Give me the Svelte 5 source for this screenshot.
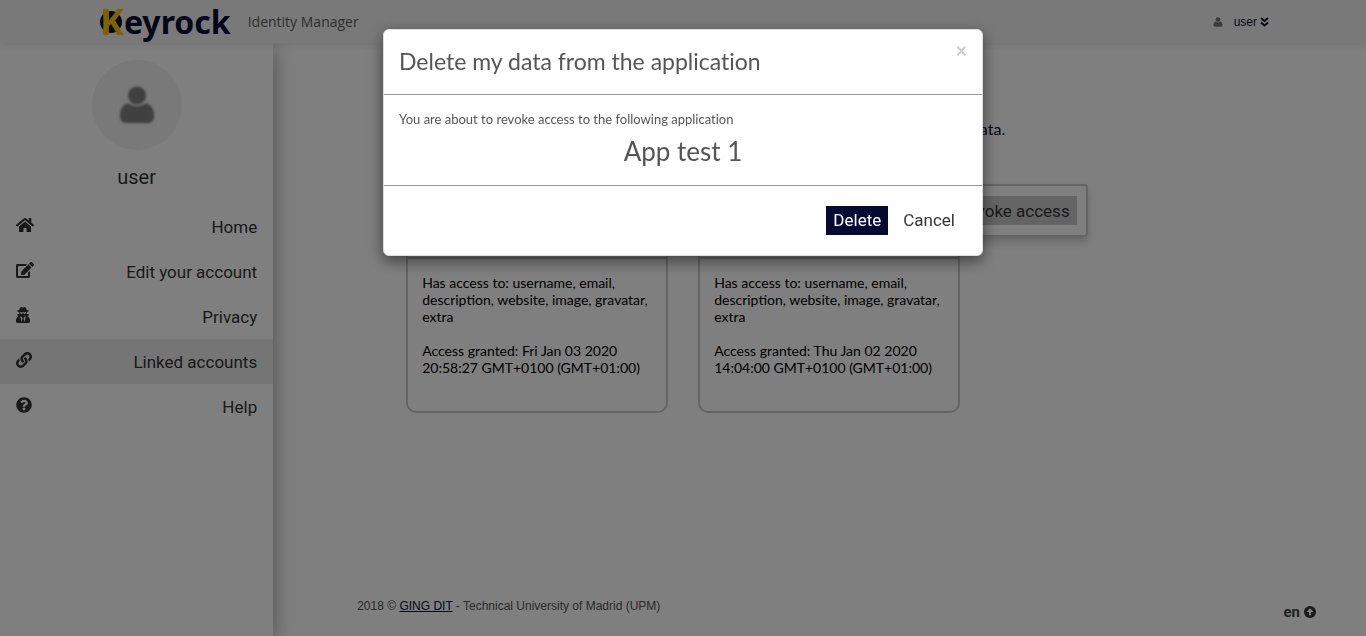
<script>
  const menu = [
    { label: 'Home', box: '0 0 576 512', w: 18, path: 'M280.37 148.26L96 300.11V464a16 16 0 0 0 16 16l112.06-.29a16 16 0 0 0 15.92-16V368a16 16 0 0 1 16-16h64a16 16 0 0 1 16 16v95.64a16 16 0 0 0 16 16.05L464 480a16 16 0 0 0 16-16V300L295.67 148.26a12.19 12.19 0 0 0-15.3 0zM571.6 251.47L488 182.56V44.05a12 12 0 0 0-12-12h-56a12 12 0 0 0-12 12v72.61L318.47 43a48 48 0 0 0-61 0L4.34 251.47a12 12 0 0 0-1.6 16.9l25.5 31A12 12 0 0 0 45.15 301l235.22-193.74a12.19 12.19 0 0 1 15.3 0L530.9 301a12 12 0 0 0 16.9-1.6l25.5-31a12 12 0 0 0-1.7-16.93z' },
    { label: 'Edit your account', box: '0 0 576 512', w: 18, path: 'M402.6 83.2l90.2 90.2c3.8 3.8 3.8 10 0 13.8L274.4 405.6l-92.8 10.3c-12.4 1.4-22.9-9.1-21.5-21.5l10.3-92.8L388.8 83.2c3.8-3.8 10-3.8 13.8 0zm162-22.9l-48.8-48.8c-15.2-15.2-39.9-15.2-55.2 0l-35.4 35.4c-3.8 3.8-3.8 10 0 13.8l90.2 90.2c3.8 3.8 10 3.8 13.8 0l35.4-35.4c15.2-15.3 15.2-40 0-55.2zM384 346.2V448H64V128h229.8c3.2 0 6.2-1.3 8.5-3.5l40-40c7.6-7.6 2.2-20.5-8.5-20.5H48C21.5 64 0 85.5 0 112v352c0 26.5 21.5 48 48 48h352c26.5 0 48-21.5 48-48V306.2c0-10.7-12.9-16-20.5-8.5l-40 40c-2.2 2.3-3.5 5.3-3.5 8.5z' },
    { label: 'Privacy', box: '0 0 448 512', w: 14, path: 'M383.9 308.3l23.9-62.6c4-10.5-3.7-21.7-15-21.7h-58.5c11-18.9 17.8-40.6 17.8-64v-.3c39.2-7.8 64-19.1 64-31.7 0-13.3-27.3-25.1-70.1-33-9.2-32.8-27-65.8-40.6-82.8-9.5-11.9-25.9-15.6-39.5-8.8l-27.6 13.8c-9 4.5-19.6 4.5-28.6 0L182.1 3.4c-13.6-6.8-30-3.1-39.5 8.8-13.5 17-31.4 50-40.6 82.8-42.7 7.9-70 19.7-70 33 0 12.6 24.8 23.9 64 31.7v.3c0 23.4 6.8 45.1 17.8 64H56.3c-11.5 0-19.2 11.7-14.7 22.3l25.8 60.2C27.3 329.8 0 372.7 0 422.4v44.8C0 491.9 20.1 512 44.8 512h358.4c24.7 0 44.8-20.1 44.8-44.8v-44.8c0-48.4-25.8-90.4-64.1-114.1zM176 480l-41.6-192 49.6 32 24 40-32 120zm96 0l-32-120 24-40 49.6-32L272 480zm41.7-298.5c-3.9 11.9-7 24.6-16.5 33.4-10.1 9.3-48 22.4-64-25-2.8-8.4-15.4-8.4-18.3 0-17 50.2-56 32.4-64 25-9.5-8.8-12.7-21.5-16.5-33.4-.8-2.5-6.3-5.7-6.3-5.8v-10.8c28.3 3.6 61 5.8 96 5.8s67.7-2.1 96-5.8v10.8c-.1.1-5.6 3.2-6.4 5.8z' },
    { label: 'Linked accounts', active: true, box: '0 0 512 512', w: 16, path: 'M326.612 185.391c59.747 59.809 58.927 155.698.36 214.59-.11.12-.24.25-.36.37l-67.2 67.2c-59.27 59.27-155.699 59.262-214.96 0-59.27-59.26-59.27-155.7 0-214.96l37.106-37.106c9.84-9.84 26.786-3.3 27.294 10.606.648 17.722 3.826 35.527 9.69 52.721 1.986 5.822.567 12.262-3.783 16.612l-13.087 13.087c-28.026 28.026-28.905 73.66-1.155 101.96 28.024 28.579 74.086 28.749 102.325.51l67.2-67.19c28.191-28.191 28.073-73.757 0-101.83-3.701-3.694-7.429-6.564-10.341-8.569a16.037 16.037 0 0 1-6.947-12.606c-.396-10.567 3.348-21.456 11.698-29.806l21.054-21.055c5.521-5.521 14.182-6.199 20.584-1.731a152.482 152.482 0 0 1 20.522 17.197zM467.547 44.449c-59.261-59.262-155.69-59.27-214.96 0l-67.2 67.2c-.12.12-.25.25-.36.37-58.566 58.892-59.387 154.781.36 214.59a152.454 152.454 0 0 0 20.521 17.196c6.402 4.468 15.064 3.789 20.584-1.731l21.054-21.055c8.35-8.35 12.094-19.239 11.698-29.806a16.037 16.037 0 0 0-6.947-12.606c-2.912-2.005-6.64-4.875-10.341-8.569-28.073-28.073-28.191-73.639 0-101.83l67.2-67.19c28.239-28.239 74.3-28.069 102.325.51 27.75 28.3 26.872 73.934-1.155 101.96l-13.087 13.087c-4.35 4.35-5.769 10.79-3.783 16.612 5.864 17.194 9.042 34.999 9.69 52.721.509 13.906 17.454 20.446 27.294 10.606l37.106-37.106c59.271-59.259 59.271-155.699.001-214.959z' },
    { label: 'Help', box: '0 0 512 512', w: 16, path: 'M504 256c0 136.997-111.043 248-248 248S8 392.997 8 256C8 119.083 119.043 8 256 8s248 111.083 248 248zM262.655 90c-54.497 0-89.255 22.957-116.549 63.758-3.536 5.286-2.353 12.415 2.715 16.258l34.699 26.31c5.205 3.947 12.621 3.008 16.665-2.122 17.864-22.658 30.113-35.797 57.303-35.797 20.429 0 45.698 13.148 45.698 32.958 0 14.976-12.363 22.667-32.534 33.976C247.128 238.528 216 254.941 216 296v4c0 6.627 5.373 12 12 12h56c6.627 0 12-5.373 12-12v-1.333c0-28.462 83.186-29.647 83.186-106.667 0-58.002-60.165-102-116.531-102zM256 338c-25.365 0-46 20.635-46 46 0 25.364 20.635 46 46 46s46-20.636 46-46c0-25.365-20.635-46-46-46z' }
  ];
  const access = 'Has access to: username, email, description, website, image, gravatar, extra';
  const apps = [
    { id: 1, granted: 'Access granted: Fri Jan 03 2020 20:58:27 GMT+0100 (GMT+01:00)' },
    { id: 2, granted: 'Access granted: Thu Jan 02 2020 14:04:00 GMT+0100 (GMT+01:00)' }
  ];
  let open = $state(true);
  const close = () => (open = false);
</script>

{#snippet person(size)}
  <svg width={size} height={size} viewBox="0 0 40 40" aria-hidden="true">
    <circle cx="20" cy="10" r="9.5" />
    <path d="M10 18Q20 25 30 18Q38 21 38 32Q38 39 31 39H9Q2 39 2 32Q2 21 10 18Z" />
  </svg>
{/snippet}

<div class="page">
  <header>
    <a class="brand" href="#home">
      <span class="logo"><span class="k">K</span><span>eyrock</span></span>
      <span class="tagline">Identity Manager</span>
    </a>
    <button class="account">
      {@render person(10)}
      <span>user</span>
      <svg class="chevrons" width="9" height="10" viewBox="0 0 9 10" aria-hidden="true">
        <path d="M1 1L4.5 4L8 1M1 5.500L4.500 8.500L8 5.500" />
      </svg>
    </button>
  </header>

  <div class="body">
    <aside>
      <div class="profile">
        <div class="avatar">{@render person(38)}</div>
        <div class="name">user</div>
      </div>
      <nav>
        {#each menu as item}
          <a href="#{item.label}" class:active={item.active}>
            <svg width={item.w} height="16" viewBox={item.box} aria-hidden="true"><path d={item.path} /></svg>
            <span>{item.label}</span>
          </a>
        {/each}
      </nav>
    </aside>

    <main>
      <p class="intro">data.</p>
      <div class="toolbar"><button class="revoke">Revoke access</button></div>
      <div class="cards">
        {#each apps as app (app.id)}
          <article>
            <div class="cover"></div>
            <div class="details">
              <p>{access}</p>
              <p>{app.granted}</p>
            </div>
          </article>
        {/each}
      </div>
      <footer>
        <span>2018 © <a href="#ging">GING DIT</a> - Technical University of Madrid (UPM)</span>
        <button class="lang">
          en
          <svg width="12" height="12" viewBox="0 0 12 12" aria-hidden="true">
            <circle cx="6" cy="6" r="6" />
            <path d="M6 2.200L9.500 6H7V9.300H5V6H2.500Z" />
          </svg>
        </button>
      </footer>
    </main>
  </div>
</div>

{#if open}
  <div class="backdrop">
    <div class="dialog" role="dialog" aria-modal="true" aria-labelledby="dialog-title">
      <div class="head">
        <h2 id="dialog-title">Delete my data from the application</h2>
        <button class="close" aria-label="Close" onclick={close}>×</button>
      </div>
      <div class="content">
        <p>You are about to revoke access to the following application</p>
        <h3>App test 1</h3>
      </div>
      <div class="actions">
        <button class="delete" onclick={close}>Delete</button>
        <button class="cancel" onclick={close}>Cancel</button>
      </div>
    </div>
  </div>
{/if}

<style>
  :global(body) { margin: 0; background: #fff; }
  .page, .backdrop { font-family: Roboto, sans-serif; color: #333; font-variant-ligatures: no-common-ligatures; }
  .page { min-height: 100vh; display: flex; flex-direction: column; }
  * { box-sizing: border-box; }
  p, h2, h3 { margin: 0; font-weight: 400; }
  button { border: 0; background: none; padding: 0; font: inherit; color: inherit; cursor: pointer; }
  a { color: inherit; text-decoration: none; }

  header {
    height: 43px; padding: 0 97px 0 100px; background: #f3f3f3;
    display: flex; align-items: center; justify-content: space-between;
    box-shadow: 0 1px 8px rgba(0, 0, 0, 0.12); position: relative;
  }
  .brand { display: flex; align-items: center; gap: 17px; }
  .logo {
    display: flex; align-items: center; position: relative; z-index: 0;
    font: 700 32px/40px "Noto Sans", sans-serif; color: #0a0a32;
  }
  .logo::before {
    content: ""; position: absolute; z-index: -1; left: 0; top: 9px;
    width: 22px; height: 22px; border-radius: 50%; background: #0a0a32;
  }
  .k { color: #ffc400; font-size: 36px; }
  .tagline { font: 400 14px/20px "Open Sans", sans-serif; color: #5c5c5c; }
  .account { display: flex; align-items: center; font: 12px/16px "Liberation Sans", sans-serif; color: #0a0f33; }
  .account span { margin: 0 3px 0 11px; }
  .account svg { fill: #777; }
  .account .chevrons { fill: none; stroke: #0a0f33; stroke-width: 2; }

  .body { flex: 1; display: flex; }
  aside { width: 20%; min-width: 220px; box-shadow: 0 6px 20px rgba(0, 0, 0, 0.4); clip-path: inset(0 -24px 0 0); }
  .profile { padding-top: 17px; display: flex; flex-direction: column; align-items: center; gap: 14px; }
  .avatar {
    width: 90px; height: 90px; border-radius: 50%; background: #f2f2f2;
    display: grid; place-items: center; fill: #808080;
  }
  .avatar :global(svg) { filter: blur(1px); }
  .name { font-size: 20px; line-height: 26px; }
  nav { margin-top: 14px; }
  nav a { height: 45px; padding: 0 16px; display: flex; align-items: center; justify-content: space-between; font-size: 17px; }
  nav a.active { background: #ebebeb; }
  nav svg { fill: #333; margin-bottom: 3px; }

  main { flex: 1; display: flex; flex-direction: column; padding: 75px 50px 14px 84px; }
  .intro { font: 16px/22px Lato, sans-serif; width: 648px; text-align: right; color: #0a0f33; }
  .toolbar {
    align-self: flex-start; margin: 44px 0 0 582px; padding: 10px 9px;
    border: 2px solid #c8c8c8; border-radius: 4px; box-shadow: 0 5px 10px rgba(0, 0, 0, 0.2);
  }
  .revoke { background: #c8c8c8; height: 29px; padding: 0 7px; font-size: 17px; }
  .cards { display: flex; gap: 30px; padding-left: 49px; margin-top: -28px; }
  article { width: 262px; border: 2px solid #c8c8c8; border-radius: 10px; }
  .cover { height: 48px; border-bottom: 2px solid #c8c8c8; }
  .details { padding: 15px 14px 35px; font: 14px/17px Lato, sans-serif; color: #000; }
  .details p + p { margin-top: 17px; }
  footer {
    margin-top: auto; display: flex; align-items: flex-start; justify-content: space-between;
    font: 12px/20px "Liberation Sans", sans-serif; color: #555;
  }
  footer a { color: #0a0f33; text-decoration: underline; }
  .lang { display: flex; align-items: center; gap: 4px; padding-top: 6px; font: 700 15px/20px Roboto, sans-serif; color: #444; }
  .lang circle { fill: #333; }
  .lang path { fill: #fff; }

  .backdrop { position: fixed; inset: 0; background: rgba(0, 0, 0, 0.5); padding: 29px 16px; }
  .dialog {
    width: 600px; max-width: 100%; margin: 0 auto; background: #fff; border: 1px solid #ddd;
    border-radius: 6px; box-shadow: 0 5px 15px rgba(0, 0, 0, 0.5); font-family: Lato, sans-serif; color: #555;
  }
  .head { display: flex; justify-content: space-between; align-items: flex-start; padding: 10px 15px 12px; border-bottom: 1px solid #999; }
  h2 { font-size: 23px; line-height: 42px; }
  .close { font: 700 20px/20px Lato, sans-serif; color: #ccc; }
  .content { padding: 15px 15px 13px; border-bottom: 1px solid #999; }
  .content p { font-size: 13px; line-height: 18px; }
  h3 { margin-top: 2px; font-size: 26px; line-height: 42px; text-align: center; }
  .actions { display: flex; justify-content: flex-end; gap: 8px; padding: 20px; font: 17px/29px Roboto, sans-serif; color: #333; }
  .actions button { padding: 0 7px; }
  .delete { background: #050a32; color: #fff; }
</style>
